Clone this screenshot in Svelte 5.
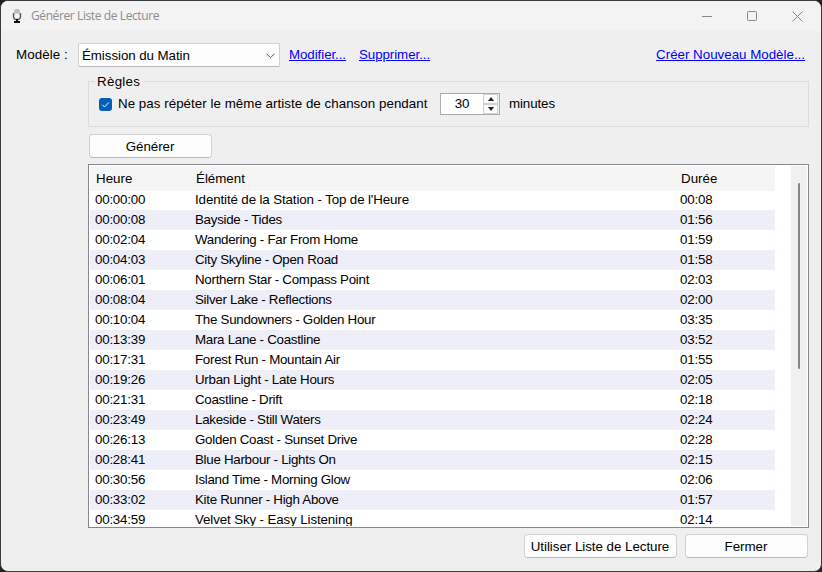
<script>
  let noRepeat = true;
  let minutes = 30;

  const items = [
    { time: '00:00:00', title: "Identité de la Station - Top de l'Heure", length: '00:08' },
    { time: '00:00:08', title: 'Bayside - Tides', length: '01:56' },
    { time: '00:02:04', title: 'Wandering - Far From Home', length: '01:59' },
    { time: '00:04:03', title: 'City Skyline - Open Road', length: '01:58' },
    { time: '00:06:01', title: 'Northern Star - Compass Point', length: '02:03' },
    { time: '00:08:04', title: 'Silver Lake - Reflections', length: '02:00' },
    { time: '00:10:04', title: 'The Sundowners - Golden Hour', length: '03:35' },
    { time: '00:13:39', title: 'Mara Lane - Coastline', length: '03:52' },
    { time: '00:17:31', title: 'Forest Run - Mountain Air', length: '01:55' },
    { time: '00:19:26', title: 'Urban Light - Late Hours', length: '02:05' },
    { time: '00:21:31', title: 'Coastline - Drift', length: '02:18' },
    { time: '00:23:49', title: 'Lakeside - Still Waters', length: '02:24' },
    { time: '00:26:13', title: 'Golden Coast - Sunset Drive', length: '02:28' },
    { time: '00:28:41', title: 'Blue Harbour - Lights On', length: '02:15' },
    { time: '00:30:56', title: 'Island Time - Morning Glow', length: '02:06' },
    { time: '00:33:02', title: 'Kite Runner - High Above', length: '01:57' },
    { time: '00:34:59', title: 'Velvet Sky - Easy Listening', length: '02:14' },
  ];

  function step(amount) {
    minutes = Math.max(0, minutes + amount);
  }
</script>

<div class="window">
  <header class="titlebar">
    <svg class="app-icon" width="10" height="16" viewBox="0 0 10 16">
      <rect x="2" y="1" width="6" height="8" rx="2.5" fill="#bdbdbd" />
      <path d="M2.5 5.5h5V8a2.5 2 0 0 1-5 0z" fill="#f4f4f4" />
      <path d="M1.5 5v3.5a3.5 3 0 0 0 7 0V5" fill="none" stroke="#5a5a5a" stroke-width="1.4" />
      <path d="M4 11h2v2h2v2H2v-2h2z" fill="#111" />
    </svg>
    <span class="title">Générer Liste de Lecture</span>
    <div class="controls">
      <svg width="10" height="11" viewBox="0 0 10 11"><path d="M0 5.5h10" /></svg>
      <svg width="10" height="11" viewBox="0 0 10 11"><rect x="0.5" y="0.5" width="9" height="9" rx="1" /></svg>
      <svg width="11" height="11" viewBox="0 0 11 11"><path d="M0.5 0.5l10 10M10.5 0.5l-10 10" /></svg>
    </div>
  </header>

  <div class="template-row">
    <span class="label">Modèle :</span>
    <div class="select">
      <span>Émission du Matin</span>
      <svg width="9" height="6" viewBox="0 0 9 6"><path d="M0.5 0.7l4 4 4-4" /></svg>
    </div>
    <a class="edit" href="#edit">Modifier...</a>
    <a class="delete" href="#delete">Supprimer...</a>
    <a class="new" href="#new">Créer Nouveau Modèle...</a>
  </div>

  <div class="body">
    <fieldset>
      <legend>Règles</legend>
      <div class="rule">
        <button class="check" class:checked={noRepeat} aria-label="Règle" on:click={() => (noRepeat = !noRepeat)}>
          {#if noRepeat}
            <svg width="13" height="13" viewBox="0 0 13 13"><path d="M3.3 6.7l2.2 2.2 4.3-4.4" /></svg>
          {/if}
        </button>
        <span class="rule-text">Ne pas répéter le même artiste de chanson pendant</span>
        <div class="spinner">
          <span class="value">{minutes}</span>
          <div class="arrows">
            <button aria-label="Plus" on:click={() => step(1)}>
              <svg width="6" height="4" viewBox="0 0 6 4"><path d="M3 0l3 4H0z" /></svg>
            </button>
            <button aria-label="Moins" on:click={() => step(-1)}>
              <svg width="6" height="4" viewBox="0 0 6 4"><path d="M0 0h6L3 4z" /></svg>
            </button>
          </div>
        </div>
        <span class="unit">minutes</span>
      </div>
    </fieldset>

    <button class="btn generate">Générer</button>

    <div class="list">
      <div class="rows">
        <div class="row head">
          <span>Heure</span>
          <span>Élément</span>
          <span>Durée</span>
        </div>
        {#each items as item}
          <div class="row">
            <span class="time">{item.time}</span>
            <span class="name" class:long={item.title.length > 35}>{item.title}</span>
            <span class="length">{item.length}</span>
          </div>
        {/each}
      </div>
      <div class="scrollbar"><div class="thumb"></div></div>
    </div>

    <footer>
      <button class="btn use">Utiliser Liste de Lecture</button>
      <button class="btn close">Fermer</button>
    </footer>
  </div>
</div>

<style>
  :global(body) {
    background: #202020;
    overflow: hidden;
  }

  .window {
    box-sizing: border-box;
    width: 822px;
    height: 572px;
    border: 1px solid #3c3c3e;
    border-radius: 8px;
    overflow: hidden;
    background: #efefef;
    color: #000;
    font-family: "Liberation Sans", Arial, sans-serif;
    font-size: 13.33px;
    line-height: 16px;
    white-space: nowrap;
  }

  button {
    padding: 0;
    font: inherit;
    color: inherit;
  }

  svg {
    display: block;
    flex: none;
  }

  .titlebar {
    display: flex;
    align-items: center;
    height: 30px;
    padding: 0 18px 0 11px;
    background: #f3f3f3;
  }

  .title {
    margin-left: 9px;
    font-family: "Open Sans", "Noto Sans", sans-serif;
    font-size: 12px;
    letter-spacing: -0.4px;
    color: #8c8c8c;
  }

  .controls {
    display: flex;
    align-items: center;
    gap: 35px;
    margin-left: auto;
  }

  .controls svg {
    fill: none;
    stroke: #868686;
  }

  .template-row {
    display: flex;
    align-items: center;
    height: 24px;
    margin-top: 12px;
    padding: 0 16px 0 15px;
  }

  .label {
    width: 62px;
    letter-spacing: 0.1px;
  }

  .select {
    box-sizing: border-box;
    display: flex;
    align-items: center;
    justify-content: space-between;
    width: 202px;
    height: 24px;
    padding: 1px 4px 0 3px;
    border: 1px solid #d0d0d0;
    border-bottom-color: #b8b8b8;
    border-radius: 2px;
    background: #fdfdfd;
    letter-spacing: -0.06px;
  }

  .select svg {
    fill: none;
    stroke: #555;
  }

  a {
    color: #0000ff;
    letter-spacing: -0.07px;
    text-decoration: underline;
    text-underline-offset: 1px;
    text-decoration-thickness: 1px;
  }

  .edit {
    margin-left: 9px;
  }

  .delete {
    margin-left: 13px;
  }

  .new {
    margin-left: auto;
    letter-spacing: 0;
  }

  .body {
    display: flex;
    flex-direction: column;
    padding: 7px 12px 0 87px;
  }

  fieldset {
    box-sizing: border-box;
    height: 53px;
    margin: 0;
    padding: 0 0 0 10px;
    border: 1px solid #dcdcdc;
  }

  legend {
    height: 14px;
    margin-left: -4px;
    padding: 0 2px;
    letter-spacing: 0.3px;
  }

  .rule {
    display: flex;
    align-items: center;
    height: 22px;
    margin-top: 5px;
  }

  .check {
    width: 13px;
    height: 13px;
    border: 1px solid #868686;
    border-radius: 3px;
    background: #fff;
  }

  .checked {
    border: none;
    background: #005fb8;
  }

  .check path {
    fill: none;
    stroke: #fff;
  }

  .rule-text {
    width: 322px;
    margin-left: 6px;
    letter-spacing: 0.04px;
  }

  .spinner {
    box-sizing: border-box;
    display: flex;
    width: 60px;
    height: 22px;
    border: 1px solid #abadb3;
    background: #fff;
  }

  .value {
    width: 42px;
    line-height: 20px;
    text-align: center;
    letter-spacing: -0.2px;
  }

  .arrows {
    display: flex;
    flex-direction: column;
    width: 16px;
    background: #f0f0f0;
  }

  .arrows button {
    box-sizing: border-box;
    display: flex;
    align-items: center;
    justify-content: center;
    width: 15px;
    height: 10px;
    border: 1px solid #d0d0d0;
    background: #fdfdfd;
  }

  .arrows path {
    fill: #222;
  }

  .unit {
    margin-left: 9px;
    letter-spacing: -0.1px;
  }

  .btn {
    box-sizing: border-box;
    height: 24px;
    padding: 1px 1px 0 0;
    border: 1px solid #d0d0d0;
    border-bottom-color: #bababa;
    border-radius: 4px;
    background: #fdfdfd;
    letter-spacing: -0.03px;
  }

  .generate {
    width: 123px;
    margin: 7px 0 6px 1px;
  }

  .list {
    box-sizing: border-box;
    display: flex;
    justify-content: space-between;
    height: 364px;
    padding: 1px;
    border: 1px solid #828790;
    background: #fff;
    overflow: hidden;
  }

  .rows {
    width: 685px;
    overflow: hidden;
  }

  .row {
    display: grid;
    grid-template-columns: 100px 485px 100px;
    height: 20px;
    padding-left: 5px;
    line-height: 19px;
  }

  .row:nth-child(odd) {
    background: #eeeef9;
  }

  .row.head {
    height: 24px;
    padding-left: 6px;
    line-height: 25px;
    background: #f5f5f5;
    border-bottom: 1px solid #f5f5f5;
    margin-bottom: -1px;
  }

  .time {
    letter-spacing: -0.22px;
  }

  .name {
    letter-spacing: -0.28px;
  }

  .name.long,
  .row:last-child .name {
    letter-spacing: -0.12px;
  }

  .length {
    letter-spacing: -0.2px;
  }

  .scrollbar {
    width: 16px;
    height: 360px;
    background: #f0f0f0;
  }

  .thumb {
    width: 2px;
    height: 186px;
    margin: 17px 0 0 7px;
    border-radius: 1px;
    background: #868686;
  }

  footer {
    display: flex;
    justify-content: flex-end;
    gap: 8px;
    margin: 6px 1px 0 0;
  }

  .use {
    width: 153px;
  }

  .close {
    width: 123px;
  }
</style>
